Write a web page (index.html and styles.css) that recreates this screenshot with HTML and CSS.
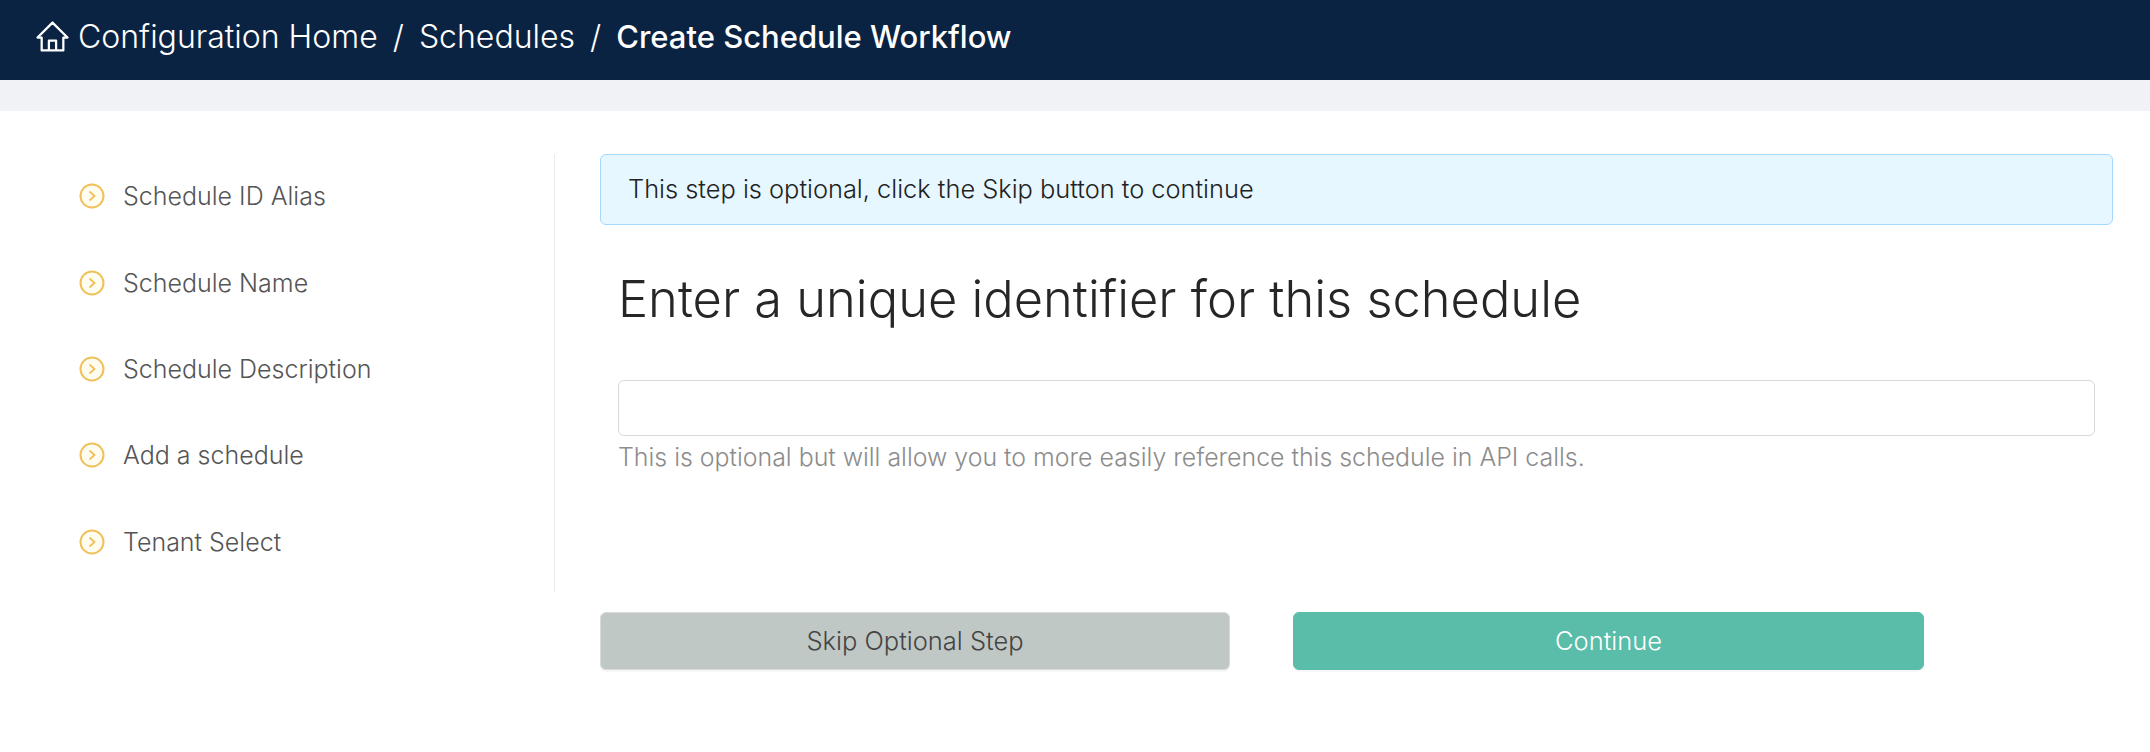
FILE: index.html
```html
<!DOCTYPE html>
<html lang="en">
<head>
<meta charset="utf-8">
<title>Create Schedule Workflow</title>
<link rel="stylesheet" href="styles.css">
</head>
<body>
<header class="topbar">
  <svg class="home-icon" viewBox="0 0 32 32" aria-hidden="true"><path d="M1.500 17 16 2.500 30.500 17H26.500V29.500H5.500V17Z M12.500 29.500V20H19.500V29.500" fill="none" stroke="#fff" stroke-width="2.200" stroke-linejoin="round" stroke-linecap="round"/></svg>
  <nav class="crumbs">
    <span>Configuration Home</span><span class="sep">/</span><span>Schedules</span><span class="sep">/</span><span class="current">Create Schedule Workflow</span>
  </nav>
</header>
<div class="band"></div>
<main class="layout">
  <aside class="steps">
    <div class="step"><svg class="step-icon" viewBox="0 0 26 26"><circle cx="13" cy="13" r="11.500"/><path d="M10.500 8.500 15.500 13l-5 4.500"/></svg><span>Schedule ID Alias</span></div>
    <div class="step"><svg class="step-icon" viewBox="0 0 26 26"><circle cx="13" cy="13" r="11.500"/><path d="M10.500 8.500 15.500 13l-5 4.500"/></svg><span>Schedule Name</span></div>
    <div class="step"><svg class="step-icon" viewBox="0 0 26 26"><circle cx="13" cy="13" r="11.500"/><path d="M10.500 8.500 15.500 13l-5 4.500"/></svg><span>Schedule Description</span></div>
    <div class="step"><svg class="step-icon" viewBox="0 0 26 26"><circle cx="13" cy="13" r="11.500"/><path d="M10.500 8.500 15.500 13l-5 4.500"/></svg><span>Add a schedule</span></div>
    <div class="step"><svg class="step-icon" viewBox="0 0 26 26"><circle cx="13" cy="13" r="11.500"/><path d="M10.500 8.500 15.500 13l-5 4.500"/></svg><span>Tenant Select</span></div>
  </aside>
  <section class="content">
    <div class="alert">This step is optional, click the Skip button to continue</div>
    <div class="form">
      <h1 class="title">Enter a unique identifier for this schedule</h1>
      <input class="field" type="text" aria-label="Schedule ID alias">
      <p class="help">This is optional but will allow you to more easily reference this schedule in API calls.</p>
    </div>
    <div class="actions">
      <button class="btn btn-skip" type="button">Skip Optional Step</button>
      <button class="btn btn-continue" type="button">Continue</button>
    </div>
  </section>
</main>
</body>
</html>
```

FILE: styles.css
```css
* { box-sizing: border-box; }
html, body { margin: 0; padding: 0; background: #fff; }
body { font-family: "Inter", "Liberation Sans", sans-serif; width: 2150px; height: 752px; overflow: hidden; }

.topbar { height: 80px; background: #0b2343; display: flex; align-items: center; padding: 0 0 8px 36px; color: #fff; }
.home-icon { width: 33px; height: 33px; flex: none; }
.crumbs { display: flex; align-items: center; margin-left: 9px; font-size: 32px; font-weight: 300; }
.sep { margin: 0 15px; }
.current { font-size: 31px; font-weight: 500; }

.band { height: 31px; background: #f0f2f5; }

.layout { display: flex; padding-top: 43px; }
.steps { width: 555px; height: 438px; border-right: 1px solid #ececec; padding: 0 0 0 79px; }
.step { height: 86.400px; padding-bottom: 2px; display: flex; align-items: center; gap: 18px; font-size: 25px; font-weight: 300; color: #555; }
.step-icon { width: 26px; height: 26px; flex: none; fill: #fffcf0; stroke: #f0c05a; stroke-width: 2; }
.step-icon path { fill: none; stroke-width: 1.800; }

.content { width: 1513px; margin-left: 45px; }
.alert { height: 71px; padding: 0 27px 2px; display: flex; align-items: center; background: #e6f7ff; border: 1px solid #a3d8ff; border-radius: 6px; font-size: 25.400px; font-weight: 300; color: #222; }
.form { padding: 0 18px; }
.title { margin: 43px 0 0; height: 112px; font-size: 50.600px; font-weight: 300; line-height: 62px; color: #262626; }
.field { display: block; width: 100%; height: 56px; background: #fff; border: 1px solid #d9d9d9; border-radius: 6px; }
.help { margin: 3px 0 0; font-size: 24.900px; font-weight: 300; line-height: 36px; color: #8c8c8c; }
.actions { display: flex; gap: 63px; margin-top: 137px; }
.btn { width: 630px; height: 58px; padding-bottom: 3px; border-radius: 6px; font-family: inherit; font-size: 25.500px; font-weight: 300; box-shadow: 0 2px 0 rgba(0,0,0,0.03); }
.btn-skip { background: #c0c8c6; border: 1px solid #d9d9d9; color: #444; }
.btn-continue { width: 631px; background: #5abda9; border: 1px solid #5abda9; color: #fff; }
```
